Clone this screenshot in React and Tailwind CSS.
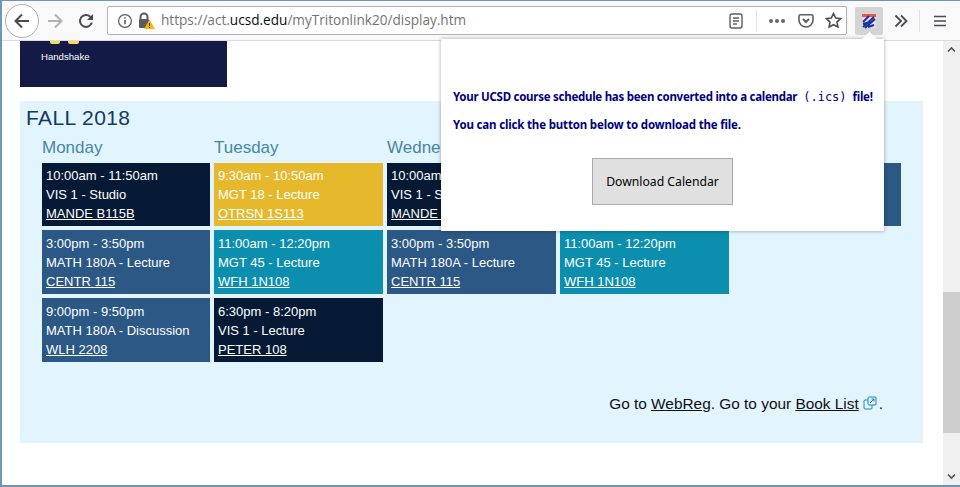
import React from 'react'

const navy = 'bg-[#061a35]'
const blue = 'bg-[#2b5885]'
const teal = 'bg-[#0c8fae]'
const gold = 'bg-[#e6b82c]'

const days = ['Monday', 'Tuesday', 'Wednesday', 'Thursday', 'Friday']

const classes = [
    [
        { time: '10:00am - 11:50am', name: 'VIS 1 - Studio', room: 'MANDE B115B', color: navy },
        { time: '3:00pm - 3:50pm', name: 'MATH 180A - Lecture', room: 'CENTR 115', color: blue },
        { time: '9:00pm - 9:50pm', name: 'MATH 180A - Discussion', room: 'WLH 2208', color: blue },
    ],
    [
        { time: '9:30am - 10:50am', name: 'MGT 18 - Lecture', room: 'OTRSN 1S113', color: gold },
        { time: '11:00am - 12:20pm', name: 'MGT 45 - Lecture', room: 'WFH 1N108', color: teal },
        { time: '6:30pm - 8:20pm', name: 'VIS 1 - Lecture', room: 'PETER 108', color: navy },
    ],
    [
        { time: '10:00am - 11:50am', name: 'VIS 1 - Studio', room: 'MANDE B115B', color: navy },
        { time: '3:00pm - 3:50pm', name: 'MATH 180A - Lecture', room: 'CENTR 115', color: blue },
    ],
    [
        { time: '9:30am - 10:50am', name: 'MGT 18 - Lecture', room: 'OTRSN 1S113', color: gold },
        { time: '11:00am - 12:20pm', name: 'MGT 45 - Lecture', room: 'WFH 1N108', color: teal },
    ],
    [
        { time: '3:00pm - 3:50pm', name: 'MATH 180A - Lecture', room: 'CENTR 115', color: blue },
    ],
]

function ClassCard({ item, first }) {
    return (
        <div className={`${item.color} ${first ? 'pt-[3px]' : 'pt-[4px]'} h-full px-1 text-[13px] leading-[19px] text-white`}>
            <div>{item.time}</div>
            <div>{item.name}</div>
            <a className="underline">{item.room}</a>
        </div>
    )
}

function Toolbar() {
    return (
        <div className="flex h-[40px] shrink-0 items-center border-b border-[#dcdcde] bg-[#f9f9fa] text-[#4a4a4f]">
            <div className="ml-[3px] flex h-[34px] w-[34px] items-center justify-center rounded-full border border-[#b1b1b3] bg-white">
                <svg width="18" height="18" viewBox="0 0 18 18" fill="none" stroke="#4a4a4f" strokeWidth="2">
                    <path d="M16 9H2.5M9 2.5 2.5 9 9 15.5" />
                </svg>
            </div>
            <svg className="ml-[7px]" width="18" height="18" viewBox="0 0 18 18" fill="none" stroke="#b1b1b3" strokeWidth="2">
                <path d="M2 9h13.5M9 2.5 15.5 9 9 15.5" />
            </svg>
            <svg className="ml-[14px]" width="16" height="16" viewBox="0 0 16 16" fill="none" stroke="#4a4a4f" strokeWidth="2">
                <path d="M13.8 9.5A6 6 0 1 1 12.2 3.6L14.5 6" />
                <path d="M15 1v6H9" fill="#4a4a4f" stroke="none" />
            </svg>
            <div className="ml-[13px] flex h-[29px] w-[740px] items-center rounded-[2px] border border-[#b1b1b3] bg-white">
                <svg className="ml-[9px]" width="16" height="16" viewBox="0 0 16 16" fill="none" stroke="#5b5b5f" strokeWidth="1.2">
                    <circle cx="8" cy="8" r="6.4" />
                    <path d="M8 7v4.2M8 4.2v1.4" strokeWidth="1.6" />
                </svg>
                <svg className="ml-[4px]" width="18" height="18" viewBox="0 0 18 18">
                    <path d="M3.5 7V5a3.5 3.5 0 0 1 7 0v2" fill="none" stroke="#5b5b5f" strokeWidth="2" />
                    <rect x="2" y="7" width="10" height="9" rx="1" fill="#5b5b5f" />
                    <path d="M12.5 7.5 18 17H7z" fill="#f5b50f" />
                    <path d="M12.5 11v3M12.5 15v1" stroke="#4a3a00" strokeWidth="1" />
                </svg>
                <div className="ml-[6px] font-['Open_Sans',sans-serif] text-[13.6px] text-[#737373]">
                    https://act.<span className="text-[#0c0c0d]">ucsd.edu</span>/myTritonlink20/display.htm
                </div>
                <div className="flex-1" />
                <svg width="16" height="16" viewBox="0 0 16 16" fill="none" stroke="#5f5f63" strokeWidth="1.4">
                    <rect x="2" y="1" width="12" height="14" rx="2" />
                    <path d="M5 5h6M5 8h6M5 11h4" />
                </svg>
                <div className="ml-[12px] h-[22px] w-px bg-[#e2e2e4]" />
                <div className="ml-[12px] flex gap-[2px]">
                    <div className="h-[4px] w-[4px] rounded-full bg-[#66666a]" />
                    <div className="h-[4px] w-[4px] rounded-full bg-[#66666a]" />
                    <div className="h-[4px] w-[4px] rounded-full bg-[#66666a]" />
                </div>
                <svg className="ml-[13px]" width="16" height="16" viewBox="0 0 16 16" fill="none" stroke="#5f5f63" strokeWidth="1.6">
                    <path d="M2.5 1.8h11A1.5 1.5 0 0 1 15 3.3V7A7 7 0 0 1 1 7V3.3a1.5 1.5 0 0 1 1.5-1.5z" />
                    <path d="M5 6l3 3 3-3" strokeWidth="2" />
                </svg>
                <svg className="ml-[11px] mr-[4px]" width="17" height="17" viewBox="0 0 17 17" fill="none" stroke="#4f4f53" strokeWidth="1.6">
                    <path d="M8.5 1.5 10.7 6l4.9.7-3.6 3.4.9 4.9-4.4-2.3L4.1 15l.9-4.9-3.6-3.4L6.3 6z" />
                </svg>
            </div>
            <div className="ml-[8px] flex h-[28px] w-[28px] items-center justify-center rounded-[2px] bg-[#d4d4d4]">
                <svg width="16" height="16" viewBox="0 0 16 16" fill="none">
                    <rect x="1" y="1" width="14" height="14" fill="#dfe0ea" />
                    <rect x="1" y="1" width="14" height="3" fill="#e2584a" />
                    <path d="M2 14 13 4M2 9l6-6M4 15l10-9M2 11l7-2M7 14l6-2" stroke="#1c2f9c" strokeWidth="1.9" />
                </svg>
            </div>
            <svg className="ml-[11px]" width="14" height="14" viewBox="0 0 14 14" fill="none" stroke="#4a4a4f" strokeWidth="1.8">
                <path d="M1.5 1.5 7 7l-5.500 5.500M7 1.500 12.500 7 7 12.500" />
            </svg>
            <div className="ml-[11px] h-[22px] w-px bg-[#e2e2e4]" />
            <svg className="ml-[13px]" width="14" height="14" viewBox="0 0 14 14" fill="none" stroke="#4a4a4f" strokeWidth="1.6">
                <path d="M1 2.500h12M1 7h12M1 11.500h12" />
            </svg>
        </div>
    )
}

function Popover() {
    return (
        <div className="absolute left-[439px] top-[38px] h-[192px] w-[443px] bg-white shadow-[0_0_4px_rgba(0,0,0,0.35)]">
            <div className="absolute left-[423px] top-[-5px] h-[11px] w-[11px] rotate-45 bg-white" />
            <div className="px-3 pt-[49px] font-['Noto_Sans',sans-serif] text-[11.5px] font-bold leading-[18px] tracking-[-0.27px] text-[#000080]">
                <p className="whitespace-nowrap">
                    Your UCSD course schedule has been converted into a calendar
                    <code className="mx-[6px] font-['DejaVu_Sans_Mono',monospace] text-[12px] font-normal tracking-normal">(.ics)</code>file!
                </p>
                <p className="mt-[10px] tracking-[-0.17px]">You can click the button below to download the file.</p>
            </div>
            <div className="mt-[24px] flex justify-center">
                <button className="h-[47px] w-[141px] border border-[#aaaaaa] bg-[#e0e0e0] pt-[2px] font-['Noto_Sans',sans-serif] text-[12.2px] text-black">
                    Download Calendar
                </button>
            </div>
        </div>
    )
}

export default function App() {
    return (
        <div className="relative flex h-[487px] w-[960px] flex-col overflow-hidden border-b-2 border-l-2 border-t border-[#6f97b5] bg-white font-['Liberation_Sans',sans-serif]">
            <Toolbar />
            <div className="flex min-h-0 flex-1">
                <div className="flex-1 px-[18px]">
                    <div className="flex h-[46px] w-[207px] flex-col bg-[#121a45] pl-[21px]">
                        <div className="ml-[9px] flex gap-2">
                            <div className="h-[3px] w-[10px] rounded-b-[2px] bg-[#f3dc5c]" />
                            <div className="h-[3px] w-[11px] rounded-b-[2px] bg-[#f3dc5c]" />
                        </div>
                        <div className="mt-[7px] text-[9.6px] leading-[12px] text-white">Handshake</div>
                    </div>
                    <div className="mt-[14px] h-[342px] w-[903px] bg-[#e2f4fd] pl-[22px] pr-[40px]">
                        <h2 className="-ml-4 pt-[4px] text-[21px] leading-[26px] tracking-[0.4px] text-[#123b60]">FALL 2018</h2>
                        <div className="mt-[4px] grid grid-cols-[168px_169px_169px_169px_168px] gap-x-1">
                            {days.map((day) => (
                                <div key={day} className="h-[28px] text-[17px] leading-[26px] text-[#46889f]">{day}</div>
                            ))}
                        </div>
                        <div className="grid grid-cols-[168px_169px_169px_169px_168px] grid-rows-[63px_64px_64px] gap-1">
                            {classes.map((column, i) =>
                                column.map((item, j) => (
                                    <div key={`${i}-${j}`} style={{ gridColumn: i + 1, gridRow: j + 1 }}>
                                        <ClassCard item={item} first={j === 0} />
                                    </div>
                                ))
                            )}
                        </div>
                        <div className="mt-[32px] flex items-center justify-end text-[15.4px] leading-[20px] text-[#111]">
                            <span>Go to <a className="underline">WebReg</a>. Go to your <a className="underline">Book List</a></span>
                            <svg className="ml-[4px] mb-[3px]" width="14" height="14" viewBox="0 0 14 14" fill="none" stroke="#1c87b8" strokeWidth="1">
                                <rect x="5" y="1" width="8" height="8" rx="1" />
                                <path d="M5 4H2a1 1 0 0 0-1 1v7a1 1 0 0 0 1 1h6a1 1 0 0 0 1-1V9" />
                                <path d="M7 7l4-4M8.500 3H11v2.500" />
                            </svg>
                            <span className="ml-[2px]">.</span>
                        </div>
                    </div>
                </div>
                <div className="flex w-[17px] shrink-0 flex-col bg-[#f0f0f0] text-[#505050]">
                    <div className="flex h-[17px] items-center justify-center">
                        <svg width="9" height="7" viewBox="0 0 9 7" fill="none" stroke="#505050" strokeWidth="1.600"><path d="M1 5.500 4.500 2 8 5.500" /></svg>
                    </div>
                    <div className="mt-[234px] h-[141px] bg-[#cdcdcd]" />
                    <div className="flex-1" />
                    <div className="flex h-[17px] items-center justify-center">
                        <svg width="9" height="7" viewBox="0 0 9 7" fill="none" stroke="#505050" strokeWidth="1.600"><path d="M1 1.500 4.500 5 8 1.500" /></svg>
                    </div>
                </div>
            </div>
            <Popover />
        </div>
    )
}
